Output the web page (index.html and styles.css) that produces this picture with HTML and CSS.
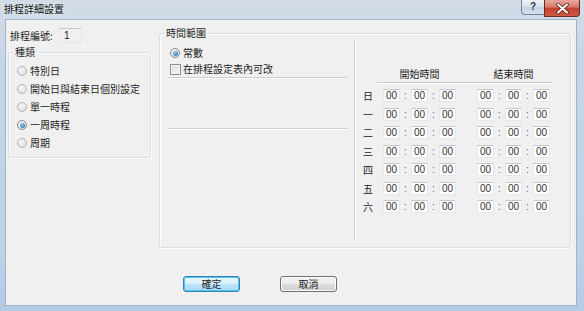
FILE: index.html
```html
<!DOCTYPE html>
<html lang="zh-Hant">
<head>
    <meta charset="UTF-8">
    <title>排程詳細設置</title>
    <link rel="stylesheet" href="styles.css">
</head>
<body>
<div class="window">
    <div class="titlebar">
        <span class="title">排程詳細設置</span>
        <div class="caption">
            <div class="cap-help">?</div>
            <div class="cap-close">
                <svg width="13" height="11" viewBox="0 0 13 11">
                    <path d="M2 1.5 L11 9.5 M11 1.5 L2 9.5" stroke="#5a1a14" stroke-width="3.6" stroke-linecap="round"/>
                    <path d="M2 1.5 L11 9.5 M11 1.5 L2 9.5" stroke="#fff" stroke-width="2" stroke-linecap="round"/>
                </svg>
            </div>
        </div>
    </div>
    <div class="client">
        <div class="content">
            <div class="left-col">
                <div class="id-row">
                    <span class="id-label">排程編號:</span>
                    <span class="id-field">1</span>
                </div>
                <fieldset class="group kind">
                    <legend>種類</legend>
                    <div class="opt"><span class="radio"></span>特別日</div>
                    <div class="opt"><span class="radio"></span>開始日與結束日個別設定</div>
                    <div class="opt"><span class="radio"></span>單一時程</div>
                    <div class="opt"><span class="radio on"></span>一周時程</div>
                    <div class="opt"><span class="radio"></span>周期</div>
                </fieldset>
            </div>
            <fieldset class="group range">
                <legend>時間範圍</legend>
                <div class="range-body">
                    <div class="range-left">
                        <div class="opt first"><span class="radio on"></span>常數</div>
                        <div class="opt"><span class="check"></span>在排程設定表內可改</div>
                        <div class="etch"></div>
                        <div class="sub-panel"></div>
                        <div class="etch"></div>
                    </div>
                    <div class="divider"></div>
                    <div class="range-right">
                        <div class="head-row">
                            <span class="day"></span>
                            <span class="head">開始時間</span>
                            <span class="head">結束時間</span>
                        </div>
                        <div class="head-line"></div>
                        <div class="time-row">
                            <span class="day">日</span>
                            <span class="f">00</span><span class="c">:</span><span class="f">00</span><span class="c">:</span><span class="f">00</span>
                            <span class="gap"></span>
                            <span class="f">00</span><span class="c">:</span><span class="f">00</span><span class="c">:</span><span class="f">00</span>
                        </div>
                        <div class="time-row">
                            <span class="day">一</span>
                            <span class="f">00</span><span class="c">:</span><span class="f">00</span><span class="c">:</span><span class="f">00</span>
                            <span class="gap"></span>
                            <span class="f">00</span><span class="c">:</span><span class="f">00</span><span class="c">:</span><span class="f">00</span>
                        </div>
                        <div class="time-row">
                            <span class="day">二</span>
                            <span class="f">00</span><span class="c">:</span><span class="f">00</span><span class="c">:</span><span class="f">00</span>
                            <span class="gap"></span>
                            <span class="f">00</span><span class="c">:</span><span class="f">00</span><span class="c">:</span><span class="f">00</span>
                        </div>
                        <div class="time-row">
                            <span class="day">三</span>
                            <span class="f">00</span><span class="c">:</span><span class="f">00</span><span class="c">:</span><span class="f">00</span>
                            <span class="gap"></span>
                            <span class="f">00</span><span class="c">:</span><span class="f">00</span><span class="c">:</span><span class="f">00</span>
                        </div>
                        <div class="time-row">
                            <span class="day">四</span>
                            <span class="f">00</span><span class="c">:</span><span class="f">00</span><span class="c">:</span><span class="f">00</span>
                            <span class="gap"></span>
                            <span class="f">00</span><span class="c">:</span><span class="f">00</span><span class="c">:</span><span class="f">00</span>
                        </div>
                        <div class="time-row">
                            <span class="day">五</span>
                            <span class="f">00</span><span class="c">:</span><span class="f">00</span><span class="c">:</span><span class="f">00</span>
                            <span class="gap"></span>
                            <span class="f">00</span><span class="c">:</span><span class="f">00</span><span class="c">:</span><span class="f">00</span>
                        </div>
                        <div class="time-row">
                            <span class="day">六</span>
                            <span class="f">00</span><span class="c">:</span><span class="f">00</span><span class="c">:</span><span class="f">00</span>
                            <span class="gap"></span>
                            <span class="f">00</span><span class="c">:</span><span class="f">00</span><span class="c">:</span><span class="f">00</span>
                        </div>
                    </div>
                </div>
            </fieldset>
        </div>
        <div class="buttons">
            <div class="btn btn-ok">確定</div>
            <div class="btn">取消</div>
        </div>
    </div>
</div>
</body>
</html>
```

FILE: styles.css
```css
*{margin:0;padding:0;box-sizing:border-box;}
body{
    width:584px;
    height:311px;
    overflow:hidden;
    font-family:"Noto Sans CJK TC","Liberation Sans",sans-serif;
    font-size:10px;
    color:#1e1e1e;
}
.window{
    width:584px;
    height:311px;
    display:flex;
    flex-direction:column;
    padding:0 7px 5px 5px;
    background:linear-gradient(#d3dce6,#c6d6e8 60px,#bdd2e9 250px,#b4cbe4);
}
.titlebar{
    height:19px;
    margin:0 -7px 0 -5px;
    padding:0 4px 0 4px;
    display:flex;
    justify-content:space-between;
    align-items:flex-start;
}
.title{
    line-height:17px;
    font-size:10px;
    color:#111;
    text-shadow:0 0 4px #eef3f8;
}
.caption{display:flex;}
.cap-help{
    width:23px;
    height:15px;
    border:1px solid #6e8197;
    border-top:none;
    border-right:none;
    border-radius:0 0 0 4px;
    background:linear-gradient(#eef2f6,#d7e0ea 50%,#c4d1de 51%,#d5e0ec);
    font-family:"Liberation Sans",sans-serif;
    font-weight:bold;
    font-size:10px;
    line-height:14px;
    text-align:center;
    color:#2a3a4c;
}
.cap-close{
    width:36px;
    height:17px;
    border:1px solid #6a2a24;
    border-top:none;
    border-radius:0 0 4px 0;
    background:linear-gradient(#e8a89e,#d8786a 45%,#c2402e 50%,#cf5a44);
    display:flex;
    align-items:center;
    justify-content:center;
}
.client{
    flex:1;
    display:flex;
    flex-direction:column;
    background:#f0f0f0;
    border:1px solid #9fb3c9;
}
.content{
    height:228px;
    display:flex;
    padding-top:7px;
}
.left-col{
    width:143px;
    margin-left:2px;
    padding-top:1px;
}
.id-row{
    height:15px;
    display:flex;
    align-items:center;
    padding-left:2px;
}
.id-label{width:49px;line-height:12px;}
.id-field{
    width:23px;
    height:15px;
    border:1px solid #e6e6e6;
    border-top-color:#c9c9c9;
    font-family:"Liberation Sans",sans-serif;
    line-height:13px;
    padding-left:4px;
}
.group{
    border:1px solid #d5dfe5;
    border-radius:3px;
    box-shadow:inset 1px 1px 0 #fff,1px 1px 0 #fff;
}
.group legend{
    line-height:12px;
    padding:0 1px;
}
.kind{
    margin-top:3px;
    height:112px;
    padding:4px 0 5px 8px;
}
.kind legend{margin-left:-3px;}
.opt{
    height:18px;
    display:flex;
    align-items:center;
    line-height:12px;
}
.radio{
    width:10px;
    height:10px;
    border:1px solid #b4b4b4;
    border-radius:50%;
    background:radial-gradient(circle at 40% 35%,#f6f6f6,#dcdcdc);
    margin-right:3px;
    display:flex;
    align-items:center;
    justify-content:center;
}
.radio.on{border-color:#8a8a8a;}
.radio.on::after{
    content:"";
    width:5px;
    height:5px;
    border-radius:50%;
    background:radial-gradient(circle at 40% 35%,#8fd0f4,#1f5f9e);
}
.check{
    width:11px;
    height:11px;
    border:1px solid #8f8f8f;
    background:linear-gradient(135deg,#dcdcdc,#f6f6f6);
    box-shadow:inset 0 0 0 1px #f4f4f4;
    margin-right:2px;
}
.range{
    width:412px;
    height:221px;
    margin-left:8px;
    padding:0;
}
.range legend{margin-left:5px;}
.range-body{
    height:208px;
    display:flex;
}
.range-left{width:194px;}
.range-left .opt{height:16px;padding-left:10px;}
.range-left .opt.first{margin-top:6px;}
.etch{
    width:180px;
    margin-left:8px;
    border-top:1px solid #cfcfcf;
    border-bottom:1px solid #fff;
}
.range-left .etch:first-of-type{margin-top:4px;}
.sub-panel{height:49px;}
.divider{
    width:2px;
    height:200px;
    margin-top:1px;
    border-left:1px solid #d0d0d0;
    border-right:1px solid #fff;
}
.range-right{padding-top:29px;}
.head-row{
    height:12px;
    display:flex;
    line-height:12px;
}
.day{
    width:27px;
    padding-left:7px;
    line-height:13px;
}
.head{
    width:73px;
    text-align:center;
}
.head + .head{margin-left:21px;}
.head-line{
    width:175px;
    margin:2px 0 0 21px;
    border-top:1px solid #c8c8c8;
    border-bottom:1px solid #fff;
}
.time-row{
    height:18.5px;
    display:flex;
    align-items:flex-start;
}
.head-line + .time-row{margin-top:5px;}
.f{
    width:17px;
    height:13px;
    background:#fff;
    border:1px solid #e2e8ee;
    border-top-color:#c4c9cf;
    border-radius:1px;
    font-family:"Liberation Sans",sans-serif;
    font-size:10px;
    line-height:11px;
    padding-left:2px;
    color:#333;
}
.c{
    width:11px;
    text-align:center;
    font-family:"Liberation Sans",sans-serif;
    line-height:13px;
    color:#666;
}
.gap{width:21px;}
.buttons{
    display:flex;
    gap:40px;
    margin-top:28px;
    padding-left:177px;
}
.btn{
    width:57px;
    height:16px;
    border:1px solid #707070;
    border-radius:3px;
    background:linear-gradient(#f2f2f2,#ebebeb 50%,#dddddd 50%,#cfcfcf);
    box-shadow:inset 0 0 0 1px #fcfcfc;
    text-align:center;
    line-height:14px;
}
.btn-ok{
    border-color:#3c7fb1;
    background:linear-gradient(#eaf6fd,#d9f0fc 50%,#bee6fd 50%,#a7d9f5);
    box-shadow:inset 0 0 0 1px #48c8f4;
}
```
